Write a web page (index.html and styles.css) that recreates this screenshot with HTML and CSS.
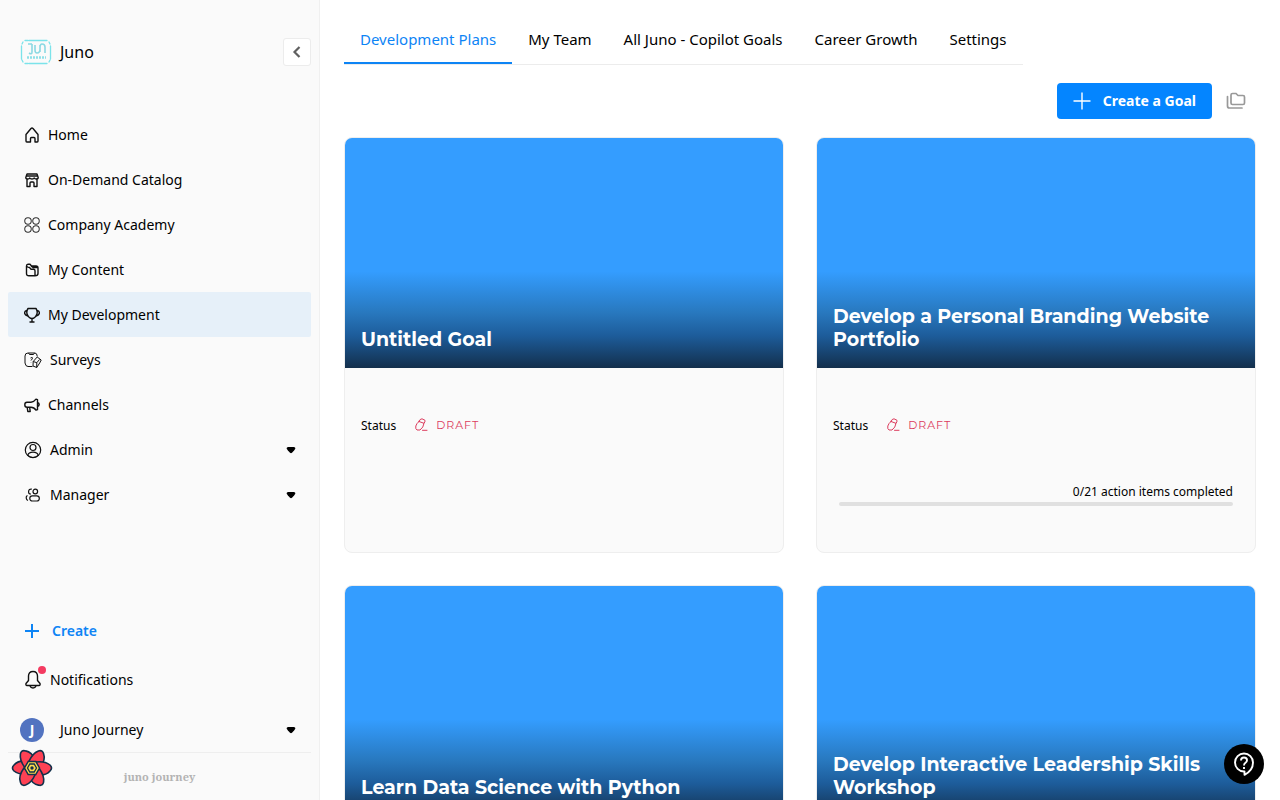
FILE: index.html
```html
<!DOCTYPE html>
<html lang="en">
<head>
<meta charset="utf-8">
<meta name="viewport" content="width=device-width, initial-scale=1">
<title>Juno - Development Plans</title>
<link rel="stylesheet" href="styles.css">
</head>
<body>
<svg class="sprite" aria-hidden="true">
  <symbol id="caret" viewBox="0 0 10 8"><path d="M2.200 1h5.600Q9.600 1 9.300 2.800 8.600 4.500 6 6.800 5 7.500 4 6.800 1.400 4.500.7 2.800.4 1 2.200 1Z" fill="#000"/></symbol>
  <symbol id="draft" viewBox="0 0 14 14"><path d="M5 3.500 10 5.300Q9.500 9.500 6 12H3Q1.200 11 1.800 8 2.500 5.500 5 3.500ZM5 3.500Q5.800.8 8 .8L11 2.300Q11.400 4 10 5.300M8.500 12.300H13" fill="none" stroke="#dc3b5d" stroke-linejoin="round" stroke-linecap="round"/></symbol>
</svg>
<aside class="sidebar">
  <header class="brand">
    <svg class="brand-logo" viewBox="0 0 32 26" role="img" aria-label="Juno Journey logo">
      <path d="M5 1.500h3M9 1.500h18M5 24.500h3M9 24.500h18M1.500 7v13M30.500 7v13M3 3l-1 2M29 3l1 2M3 23l-1-2M29 23l1-2" stroke="#7be3ea" stroke-width="1.300" stroke-linecap="round"/>
      <path d="M12 5v8q0 3-3 1M15 6v5q0 3 2 3 3 0 3-4V6M20 13V9q0-4 2-4 3 0 3 3v6M8 5h4" fill="none" stroke="#8bd9e3" stroke-width="1.600"/>
      <path d="M7 18.500h19" stroke="#8fe0e8" stroke-width="2.500" stroke-dasharray="2 1"/>
    </svg>
    <span class="brand-name">Juno</span>
    <button class="collapse" type="button" aria-label="Collapse sidebar"><svg width="10" height="14" viewBox="0 0 10 14"><path d="m7.500 2-5 5 5 5" fill="none" stroke="#606060" stroke-width="2.200"/></svg></button>
  </header>
  <nav class="menu" aria-label="Main">
    <a class="item" href="#"><svg width="16" height="16" viewBox="0 0 16 16"><path d="M5 15H2.800Q2 15 2 14V7.500l5-6q1-1 2 0l5 6V14q0 1-.8 1H11v-3.500q0-1-1-1H7.500q-1 0-1 1V15Z"/></svg>Home</a>
    <a class="item" href="#"><svg width="16" height="16" viewBox="0 0 16 16"><path d="M3 7v7.500h3V11q0-1 1-1h2q1 0 1 1v3.500h3V7M3 2h10l1.200 3.500q0 1.500-2 1.500-1.500 0-2-1-.5 1-2.200 1T5.800 6q-.5 1-2 1-2 0-2-1.500ZM2.500 4h11"/></svg>On-Demand Catalog</a>
    <a class="item" href="#"><svg width="16" height="16" viewBox="0 0 16 16" class="fine"><rect x=".8" y=".8" width="6.400" height="6.400" rx="2.500"/><rect x="8.800" y=".8" width="6.400" height="6.400" rx="2.500"/><rect x=".8" y="8.800" width="6.400" height="6.400" rx="2.500"/><rect x="8.800" y="8.800" width="6.400" height="6.400" rx="2.500"/></svg>Company Academy</a>
    <a class="item" href="#"><svg width="16" height="16" viewBox="0 0 16 16"><path d="M11 13.800H5Q2.500 13.800 2.500 11.500V4Q2.500 2.200 4 2.200h2L7.500 4H12q2 0 2 2v5.500q0 2.300-3 2.300ZM2.800 4.500Q4 5.500 5.500 5.500L7 7.200h2.500q1.500 0 1.500 1.500v5M7 4l2 1.500h4.500"/></svg>My Content</a>
    <a class="item active" href="#" aria-current="page"><svg width="16" height="16" viewBox="0 0 16 16"><path d="M4 1.500h8q2 3 .7 6-1.700 4-4.700 4t-4.700-4Q2 4.500 4 1.500ZM3 3.500Q.5 4 .6 6T3.800 9M13 3.500q2.500.5 2.400 2.500T12.200 9M8 11.500V15M5.500 15h5"/></svg>My Development</a>
    <a class="item" href="#"><svg width="18" height="16" viewBox="0 0 18 16" class="fine"><path d="M8.500 14.500H4Q1.500 14.500 1 11V4Q1 1 4 1h7Q13 1 13.300 4.500M4.500 1 5.500 2.500h4l1-1.500M6.500 6q2.500-1.200 2 .5L7 8.500M7 10.500v.3M9.200 9.500l4-4.500 4 3-1.500 3-3 4.500-3.700-1.500ZM9.200 9.500l3.600 1.200-.1 4.800M12.800 10.700l2.700-3.200"/></svg>Surveys</a>
    <a class="item" href="#"><svg width="16" height="16" viewBox="0 0 16 16"><path d="M3 5.200h4q3-.2 5-3l1.500.5v10L12 13.200q-2-3-5-3H3Q.8 10.200.8 7.700T3 5.200ZM3.200 10.500l.6 4h2.400l-.5-4M13.500 5.500q1.700.5 1.700 2t-1.700 2"/></svg>Channels</a>
    <button class="item" type="button" aria-expanded="false"><svg width="18" height="18" viewBox="0 0 18 18" class="medium"><circle cx="9" cy="9" r="7.700"/><circle cx="9" cy="6.500" r="3"/><path d="M3.800 14.300q.7-3.100 5.200-3.100t5.200 3.100q-2.200 2.200-5.200 2.200t-5.200-2.200Z"/></svg>Admin<svg class="caret"><use href="#caret"/></svg></button>
    <button class="item" type="button" aria-expanded="false"><svg width="18" height="18" viewBox="0 0 18 18" class="medium"><circle cx="11.300" cy="5.500" r="2.300"/><path d="M7.800 3.200Q4.800 2.800 4.600 5.500T7 8M3.500 9.500Q2 10 2.200 12t1.800 2.500"/><rect x="5.800" y="9.800" width="9.500" height="5.200" rx="2.500"/></svg>Manager<svg class="caret"><use href="#caret"/></svg></button>
  </nav>
  <div class="footer">
    <button class="item create" type="button"><svg width="16" height="16" viewBox="0 0 16 16"><path d="M8 1v14M1 8h14"/></svg>Create</button>
    <a class="item notifications" href="#"><span class="bell"><svg width="18" height="20" viewBox="0 0 18 20"><path d="M9 1.500Q4.500 1.500 4.500 6v4.500L2 13.500q-.5 2 1 2h12q1.500 0 1-2l-2.500-3V6Q13.500 1.500 9 1.500ZM6 16q.8 2 3 2t3-2"/></svg><i class="dot"></i></span>Notifications</a>
    <button class="item account" type="button" aria-expanded="false"><span class="avatar">J</span>Juno Journey<svg class="caret"><use href="#caret"/></svg></button>
    <div class="signature">juno journey</div>
  </div>
</aside>
<main class="content">
  <nav class="tabs" aria-label="Development">
    <a class="tab selected" href="#" aria-current="page">Development Plans</a>
    <a class="tab" href="#">My Team</a>
    <a class="tab" href="#">All Juno - Copilot Goals</a>
    <a class="tab" href="#">Career Growth</a>
    <a class="tab" href="#">Settings</a>
  </nav>
  <div class="toolbar">
    <button class="primary" type="button"><svg width="18" height="18" viewBox="0 0 18 18"><path d="M9 .5v17M.5 9h17" stroke="#fff" stroke-width="1.400"/></svg>Create a Goal</button>
    <button class="folders" type="button" aria-label="Goal folders"><svg width="20" height="18" viewBox="0 0 20 18"><path d="M5 3q0-1.500 1.500-1.500H10L12 3.500h5q1.500 0 1.500 1.500v6q0 1.500-1.500 1.500H6.500Q5 12.500 5 11ZM1.500 4.500v9.500q0 2 2 2H16" fill="none" stroke="#999" stroke-width="1.700" stroke-linecap="round"/></svg></button>
  </div>
  <section class="goals" aria-label="Goals">
    <article class="card"><div class="cover"><h2>Untitled Goal</h2></div><div class="details"><div class="status">Status <span class="badge"><svg width="14" height="14"><use href="#draft"/></svg>DRAFT</span></div></div></article>
    <article class="card"><div class="cover"><h2>Develop a Personal Branding Website Portfolio</h2></div><div class="details"><div class="status">Status <span class="badge"><svg width="14" height="14"><use href="#draft"/></svg>DRAFT</span></div><div class="progress"><span id="p1">0/21 action items completed</span><div class="track" role="progressbar" aria-labelledby="p1" aria-valuemin="0" aria-valuemax="21" aria-valuenow="0"></div></div></div></article>
    <article class="card"><div class="cover"><h2>Learn Data Science with Python</h2></div><div class="details"></div></article>
    <article class="card"><div class="cover"><h2>Develop Interactive Leadership Skills Workshop</h2></div><div class="details"></div></article>
  </section>
</main>
<button class="flower" type="button" aria-label="Open query tools"><svg width="42" height="40" viewBox="-21 -20 42 40">
  <g fill="#ff4154" stroke="#12304a" stroke-width="1.600" stroke-linejoin="round">
    <path id="petal" d="M-4-7Q-14-8-18-3-21 0-18 3-13 7-4 6Z"/>
    <use href="#petal" transform="rotate(60)"/><use href="#petal" transform="rotate(120)"/><use href="#petal" transform="rotate(180)"/><use href="#petal" transform="rotate(240)"/><use href="#petal" transform="rotate(300)"/>
  </g>
  <path d="M-3.800-6.500h7.600L7.500 0 3.800 6.500h-7.600L-7.500 0Z" fill="#ffd94c" stroke="#12304a" stroke-width="1.500"/>
  <path d="M-2.200-4h4.400L4.500 0 2.200 4h-4.400L-4.500 0Z" fill="none" stroke="#12304a" stroke-width="1.300"/>
  <circle r="1.700" fill="#12304a"/>
</svg></button>
<button class="help" type="button" aria-label="Help"><svg width="24" height="26" viewBox="0 0 24 26" fill="none" stroke="#fff" stroke-width="1.900"><path d="M12.500 20.500V23.800Q21 19.500 21 11.500A9 9 0 1 0 12 20.500Z" stroke-linejoin="round"/><path d="M9 9.500Q9 6.500 12 6.500t3 2.800q0 1.500-1.500 2.500T12 14.500M12 16v2" /></svg></button>
</body>
</html>
```
FILE: styles.css
```css
* { box-sizing: border-box; }
body {
  display: flex;
  height: 100vh;
  margin: 0;
  overflow: hidden;
  color: #000;
  background: #fff;
  font: 14px/20px "Noto Sans", sans-serif;
}
a { color: inherit; text-decoration: none; }
button { padding: 0; border: 0; background: none; color: inherit; font: inherit; cursor: pointer; }
svg { display: block; flex: none; }
.sprite { position: absolute; width: 0; height: 0; }

.sidebar {
  display: flex;
  flex: 0 0 320px;
  flex-direction: column;
  padding: 0 8px;
  border-right: 1px solid #f0f0f0;
  background: #fafafa;
}
.brand { display: flex; align-items: center; gap: 8px; padding: 38px 0 46px 12px; font-size: 16px; }
.brand-logo { width: 32px; height: 26px; }
.collapse {
  display: grid;
  place-items: center;
  width: 28px;
  height: 28px;
  margin-left: auto;
  border: 1px solid #ececec;
  border-radius: 3px;
  background: #fff;
}
.item {
  display: flex;
  align-items: center;
  gap: 8px;
  width: 100%;
  height: 45px;
  padding: 0 15px 0 16px;
  border-radius: 2px;
  text-align: left;
}
.item > svg:first-child, .bell svg { fill: none; stroke: #111; stroke-width: 1.4; stroke-linejoin: round; }
.item > svg.medium:first-child { stroke-width: 1.2; }
.item > svg.fine:first-child { stroke-width: 1; }
.active { background: #e6f0f9; }
.item .caret { width: 10px; height: 8px; margin-left: auto; }

.footer { margin-top: auto; }
.item.create { gap: 12px; color: #0d84f5; font-weight: 600; }
.item.create > svg:first-child { stroke: #0d84f5; stroke-width: 2; }
.item.notifications { height: 53px; }
.bell { position: relative; }
.dot { position: absolute; top: -4px; right: -4px; width: 8px; height: 8px; border-radius: 50%; background: #f43b61; }
.item.account { height: 46px; gap: 16px; padding-top: 1px; padding-left: 12px; }
.avatar {
  display: grid;
  place-items: center;
  width: 24px;
  height: 24px;
  border-radius: 50%;
  background: #5273c0;
  color: #fff;
  font-weight: 700;
}
.signature {
  height: 48px;
  border-top: 1px solid #eee;
  color: #b3b3b3;
  font: bold 11px/48px "Noto Serif", "Liberation Serif", serif;
  text-align: center;
}

.content { flex: 1; min-width: 0; padding: 16px 24px; overflow-y: auto; scrollbar-width: none; }
.tabs { display: flex; width: fit-content; border-bottom: 1px solid #ececec; }
.tab { height: 48px; padding: 13px 16px; font-size: 15px; white-space: nowrap; }
.selected { border-bottom: 2px solid #0d84f5; color: #0d84f5; }
.toolbar { display: flex; align-items: center; justify-content: flex-end; gap: 14px; padding: 18px 10px 18px 0; }
.primary {
  display: flex;
  align-items: center;
  gap: 12px;
  height: 36px;
  padding: 0 16px;
  border-radius: 4px;
  background: #0485ff;
  color: #fff;
  font-weight: 700;
}
.goals { display: grid; grid-template-columns: 1fr 1fr; gap: 32px; }
.card { display: flex; flex-direction: column; min-height: 416px; overflow: hidden; border: 1px solid #eee; border-radius: 8px; background: #fafafa; }
.cover {
  display: flex;
  align-items: flex-end;
  height: 230px;
  padding: 17px 16px;
  background: linear-gradient(#349dff 58%, #2878be 76%, #1d5c9a 86%, #132f4c);
}
h2 { margin: 0; color: #fff; font: bold 19px/23px Montserrat, Inter, sans-serif; }
.details { display: flex; flex: 1; flex-direction: column; padding: 48px 16px 40px; font-size: 12px; }
.status { display: flex; align-items: center; gap: 18px; }
.badge { display: flex; align-items: center; gap: 8px; padding-bottom: 2px; color: #dc3b5d; font: 11px/18px Montserrat, Inter, sans-serif; letter-spacing: 1px; }
.progress { margin: 46px 6px 0; text-align: right; }
.progress span { display: block; }
.track { height: 4px; border-radius: 2px; background: #e0e0e0; }

.flower { position: fixed; bottom: 12px; left: 11px; }
.help {
  position: fixed;
  right: 16px;
  bottom: 16px;
  display: grid;
  place-items: center;
  width: 40px;
  height: 40px;
  border-radius: 50%;
  background: #000;
}
```
